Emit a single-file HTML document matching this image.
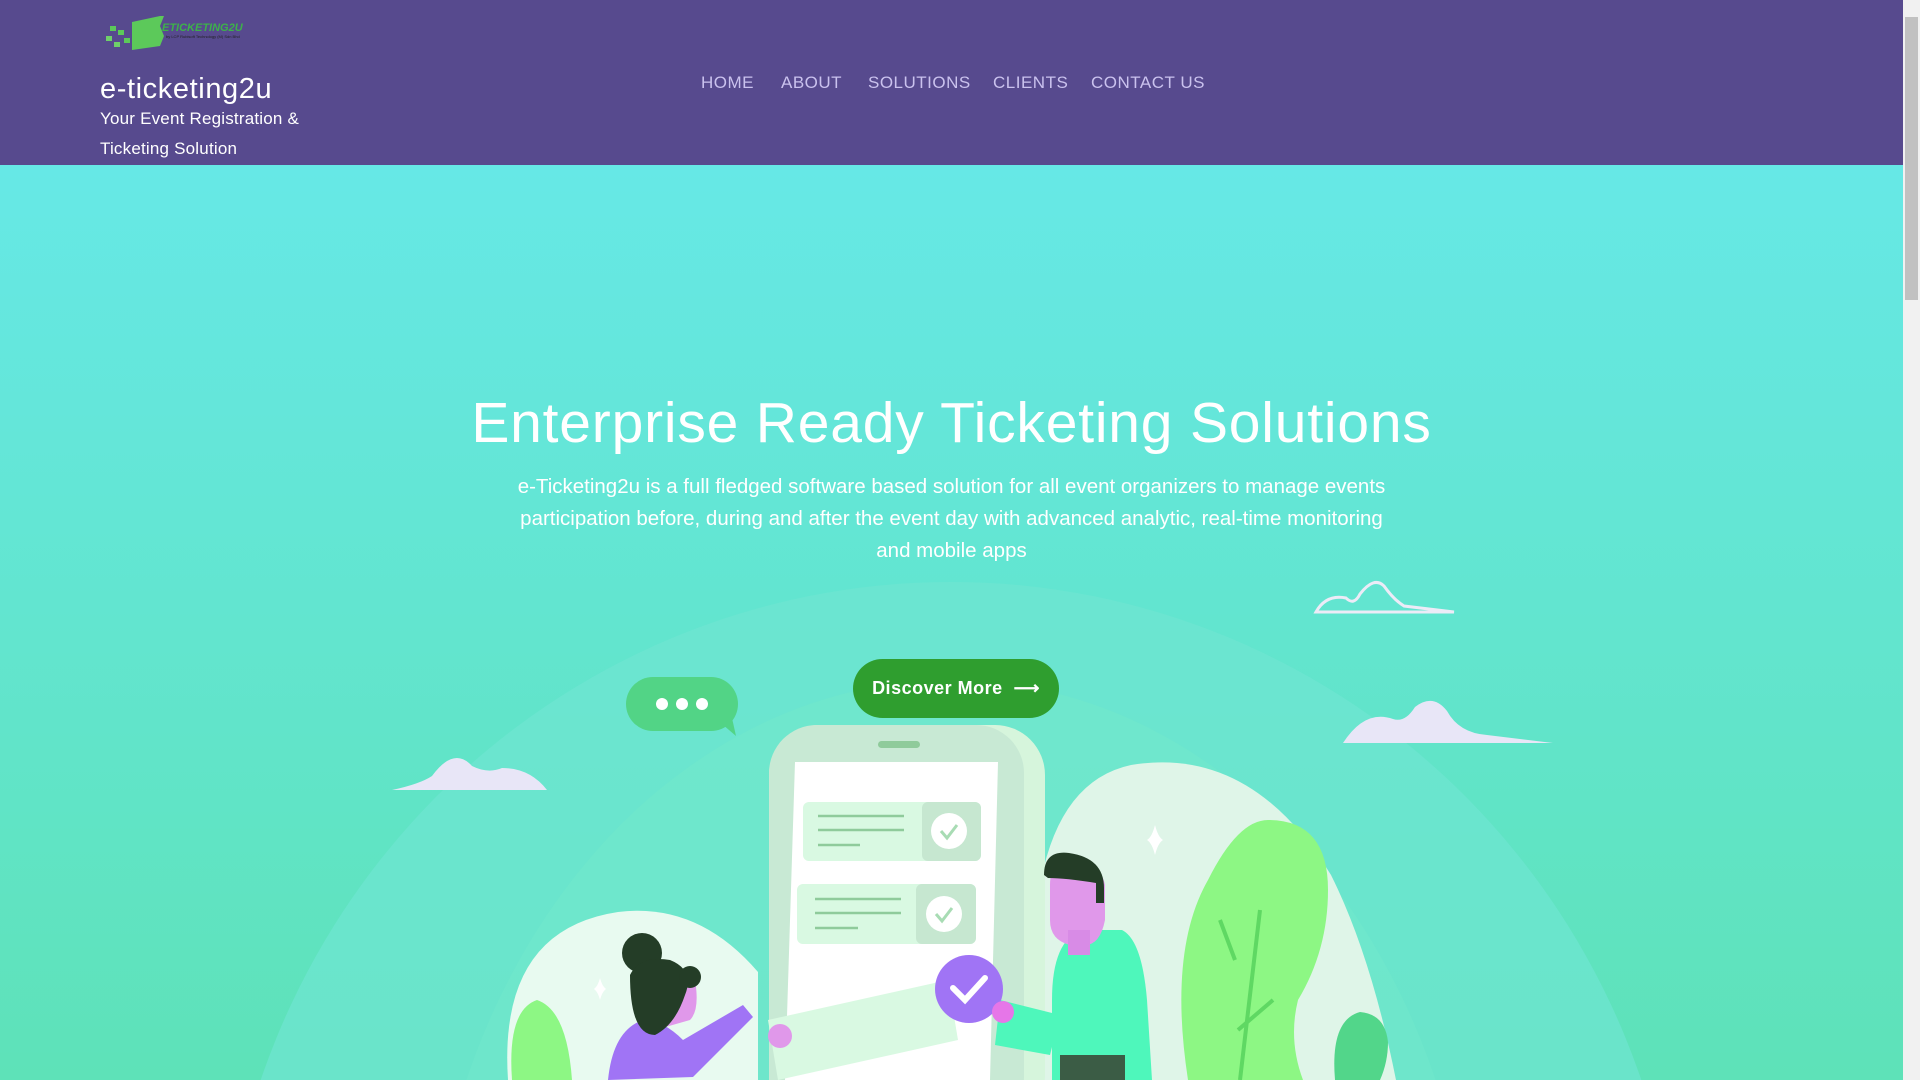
<!DOCTYPE html>
<html><head><meta charset="utf-8"><style>
*{margin:0;padding:0;box-sizing:border-box}
html,body{width:1920px;height:1080px;overflow:hidden}
body{font-family:"Liberation Sans",sans-serif;position:relative;background:#62e3c8}
.hdr{position:absolute;left:0;top:0;width:1903px;height:165px;background:#574a8e}
.hero{position:absolute;left:0;top:165px;width:1903px;height:915px;background:linear-gradient(#66e8e6,#5ee2b8);overflow:hidden}
.title{position:absolute;left:100px;top:73px;color:#fff;font-size:29px;letter-spacing:0.6px}
.sub{position:absolute;left:100px;top:104px;color:#fff;font-size:17px;line-height:30px;letter-spacing:0.2px}
.nav{position:absolute;top:73px;color:#cac2ee;font-size:17px;letter-spacing:0.5px}
h1{position:absolute;left:0;width:1903px;top:390px;text-align:center;color:#fff;font-size:57px;font-weight:normal;letter-spacing:0.8px}
.p{position:absolute;left:506px;width:891px;top:471px;text-align:center;color:#fff;font-size:20.5px;line-height:32px}
.btn{position:absolute;left:853px;top:659px;width:206px;height:59px;border-radius:30px;background:#2f9e2f;color:#fff;font-weight:bold;font-size:18px;line-height:59px;text-align:center;letter-spacing:0.5px}
.sb{position:absolute;left:1903px;top:0;width:17px;height:1080px;background:#f1f1f1}
.th{position:absolute;left:1905px;top:17px;width:13px;height:283px;background:#c1c1c1}
</style></head><body>
<div class="hero"></div>
<svg style="position:absolute;left:0;top:0" width="1903" height="1080" viewBox="0 0 1903 1080">
<ellipse cx="951" cy="1320" rx="730" ry="738" fill="#6fe6d2" opacity="0.7"/>
<ellipse cx="951" cy="1330" rx="525" ry="650" fill="#72e8cc" opacity="0.6"/>
<path d="M1316 612 q10-18 30-14 q8 8 14-4 q14-18 24-8 q10 14 20 20 l50 6 z" fill="none" stroke="#ecebf7" stroke-width="3"/>
<path d="M1343 743 q22-34 50-24 q12 4 22-12 q18-14 32 4 q12 22 40 24 l66 8 z" fill="#e8e6f7"/>
<path d="M392 790 q28-6 40-14 q22-30 40-10 q16 8 30 2 q28 0 45 22 z" fill="#e8e6f7"/>
<path d="M1041 1080 V880 q20-100 90-115 q120-20 200 110 q40 80 65 205 z" fill="#dff5e8"/>
<path d="M508 1080 q-10-150 110-168 q80-10 140 60 V1080z" fill="#e8faf0"/>
<path d="M1188 1080 q-20-130 20-200 q30-60 60-60 q60 0 60 70 q0 60-30 110 q-10 40 5 80 z" fill="#8df784"/>
<path d="M1240 1080 l20-170 M1235 960 l-15-40 M1238 1030 l35-30" stroke="#5fd863" stroke-width="4" fill="none"/>
<path d="M1335 1080 q-5-60 25-68 q25 2 28 30 q0 20-8 38z" fill="#52d68a"/>
<path d="M512 1080 q-5-70 25-80 q30 10 35 80z" fill="#8df784"/>
<rect x="769" y="725" width="276" height="400" rx="50" fill="#d6f5dc"/>
<rect x="769" y="725" width="255" height="400" rx="48" fill="#c8e9d4"/>
<rect x="878" y="741" width="42" height="7" rx="3.5" fill="#8fcb9b"/>
<path d="M795 762 H998 L990 1080 H785 z" fill="#fff"/>
<rect x="803" y="802" width="178" height="59" rx="6" fill="#d9f9e2"/>
<rect x="922" y="802" width="59" height="59" rx="6" fill="#c6e7d0"/>
<circle cx="949" cy="831" r="18" fill="#fff"/>
<path d="M941 831 l6 7 l10-13" stroke="#a8dcb4" stroke-width="3" fill="none"/>
<rect x="797" y="884" width="179" height="60" rx="6" fill="#d9f9e2"/>
<rect x="916" y="884" width="60" height="60" rx="6" fill="#c6e7d0"/>
<circle cx="944" cy="914" r="18" fill="#fff"/>
<path d="M936 914 l6 7 l10-13" stroke="#a8dcb4" stroke-width="3" fill="none"/>
<path d="M818 816H904M818 830H904M818 845H860M815 899H901M815 913H901M815 928H858" stroke="#8fcb9b" stroke-width="2.5"/>
<rect x="626" y="677" width="112" height="54" rx="27" fill="#52d486"/>
<path d="M722 724 l14 12 l-4-18z" fill="#52d486"/>
<circle cx="662" cy="704" r="6" fill="#fff"/><circle cx="682" cy="704" r="6" fill="#fff"/><circle cx="702" cy="704" r="6" fill="#fff"/>
<path d="M1155 825 q3 12 8 15 q-5 3-8 15 q-3-12-8-15 q5-3 8-15z" fill="#fff"/>
<path d="M600 978 q2 8 6 11 q-4 3-6 11 q-2-8-6-11 q4-3 6-11z" fill="#fff"/>
<path d="M768 1020 l180-40 l10 60 l-180 40z" fill="#d9f9e2"/>
<path d="M1052 1080 V1000 q0-60 30-70 h40 q20 10 25 70 l5 80z" fill="#4ef7bb"/>
<path d="M1000 1000 l60 15 l-10 40 l-55-10z" fill="#4ef7bb"/>
<rect x="1060" y="1055" width="65" height="30" fill="#3b5c45"/>
<path d="M1050 885 q0-25 20-25 q30 0 35 25 v35 q-5 25-20 25 h-15 q-20-5-20-25z" fill="#e098ea"/>
<rect x="1068" y="930" width="22" height="25" fill="#d88be6"/>
<path d="M1044 875 q0-25 25-22 q35 5 35 35 v15 h-8 v-20 q-30-5-48-5z" fill="#243d27"/>
<circle cx="969" cy="989" r="34" fill="#a074f5"/>
<path d="M953 988 l12 12 l20-22" stroke="#fff" stroke-width="6" fill="none" stroke-linecap="round"/>
<circle cx="1003" cy="1012" r="11" fill="#e676e8"/>
<path d="M608 1080 q5-50 35-60 q20 0 40 20 l60-35 l10 12 l-60 60z" fill="#a074f5"/>
<circle cx="780" cy="1036" r="12" fill="#e098ea"/>
<path d="M655 1030 q-5-40 10-60 q20-5 30 10 q5 30-5 40z" fill="#e098ea"/>
<circle cx="642" cy="953" r="20" fill="#243d27"/>
<path d="M630 975 q10-20 40-15 q25 10 15 35 q-10 30-30 40 q-25 0-25-60z" fill="#243d27"/>
<circle cx="690" cy="977" r="11" fill="#243d27"/>
</svg>
<div class="hdr">
<svg style="position:absolute;left:104px;top:14px" width="152" height="38" viewBox="0 0 152 38">
<path d="M28 8 l28-6 h4 l-4 10 l4 10 l-4 10 l-28 4z" fill="#5cc95a"/>
<rect x="6" y="12" width="6" height="5" fill="#5cc95a"/><rect x="14" y="16" width="6" height="5" fill="#5cc95a"/><rect x="2" y="22" width="6" height="5" fill="#6fd06a"/><rect x="10" y="28" width="6" height="5" fill="#6fd06a"/><rect x="20" y="24" width="6" height="5" fill="#5cc95a"/>
<text x="58" y="17" font-family="Liberation Sans" font-size="11" font-weight="bold" fill="#3db14a" font-style="italic">ETICKETING2U</text>
<text x="62" y="24" font-family="Liberation Sans" font-size="4" fill="#222">by LCP Rubisoft Technology (M) Sdn Bhd</text>
</svg>
<div class="title">e-ticketing2u</div>
<div class="sub">Your Event Registration &amp;<br>Ticketing Solution</div>
<div class="nav" style="left:701px">HOME</div>
<div class="nav" style="left:781px">ABOUT</div>
<div class="nav" style="left:868px">SOLUTIONS</div>
<div class="nav" style="left:993px">CLIENTS</div>
<div class="nav" style="left:1091px">CONTACT US</div>
</div>
<h1>Enterprise Ready Ticketing Solutions</h1>
<div class="p">e-Ticketing2u is a full fledged software based solution for all event organizers to manage events participation before, during and after the event day with advanced analytic, real-time monitoring and mobile apps</div>
<div class="btn">Discover More &nbsp;⟶</div>
<div class="sb"></div><div class="th"></div>
</body></html>
